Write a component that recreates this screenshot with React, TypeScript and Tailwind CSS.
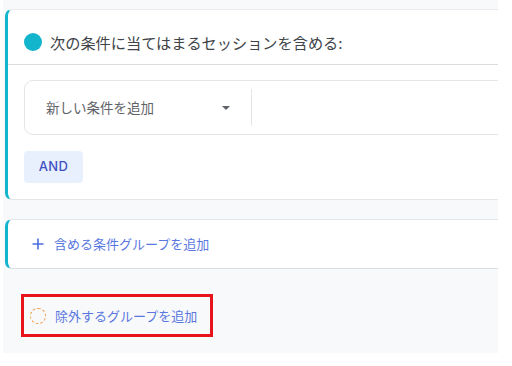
import React from "react";

export default function App() {
  const font = { fontFamily: '"Noto Sans CJK JP", "Noto Sans", sans-serif' };
  return (
    <div className="w-[512px] h-[366px] bg-white overflow-hidden" style={font}>
      <div className="ml-[3px] w-[495px] h-[353px] bg-[#f8f9fa] overflow-hidden pl-[2px] pt-[9px]">
        {/* Card 1 */}
        <div className="w-[520px] h-[191px] bg-white border-l-[3px] border-[#12b5cb] rounded-l-[7px] border-t border-t-[#e8eaed] border-b border-b-[#e3e5e8] flex flex-col">
          <div className="h-[55px] flex items-center pt-[10px] pl-[16px] border-b border-[#dadce0]">
            <span className="w-[18px] h-[18px] rounded-full bg-[#12b5cb] mr-[8px]" />
            <span className="text-[15.2px] leading-[22px] text-[#404448]">次の条件に当てはまるセッションを含める:</span>
          </div>
          <div className="pl-[16px] pt-[15px]">
            <div className="h-[55px] w-[520px] border border-[#e3e5e8] rounded-[9px] flex items-center">
              <div className="w-[226px] flex items-center justify-between pl-[21px] pr-[21px] h-full">
                <span className="text-[13.5px] text-[#5f6368]">新しい条件を追加</span>
                <span className="w-0 h-0 border-l-[4px] border-r-[4px] border-t-[4px] border-l-transparent border-r-transparent border-t-[#5f6368]" />
              </div>
              <div className="w-[1px] h-[37px] bg-[#e3e5e8]" />
            </div>
          </div>
          <div className="pl-[16px] pt-[16px]">
            <div className="w-[59px] h-[32px] rounded-[4px] bg-[#e8f0fe] flex items-center justify-center">
              <span className="text-[13px] font-medium text-[#3f51c0] tracking-[0.4px]" style={{ fontFamily: 'Inter, "Noto Sans", sans-serif' }}>AND</span>
            </div>
          </div>
        </div>
        {/* Card 2 */}
        <div className="mt-[19px] w-[520px] h-[50px] bg-white border-l-[3px] border-[#12b5cb] rounded-l-[7px] border-t border-t-[#e3e5e8] border-b border-b-[#dadce0] flex items-center pl-[24px]">
          <svg width="12" height="12" viewBox="0 0 12 12" className="mr-[10px]">
            <path d="M6 0.5V11.5M0.5 6H11.5" stroke="#4a6ee0" strokeWidth="1.6" />
          </svg>
          <span className="text-[13px] text-[#5a77e0]">含める条件グループを追加</span>
        </div>
        {/* Exclude */}
        <div className="mt-[25px] ml-[16px] w-[192px] h-[43px] border-[3px] border-[#e8141c] flex items-center pl-[6px]">
          <span className="w-[16px] h-[16px] rounded-full border border-dashed border-[#f29b4b] mr-[9px]" />
          <span className="text-[13px] text-[#5a77e0]">除外するグループを追加</span>
        </div>
      </div>
    </div>
  );
}
